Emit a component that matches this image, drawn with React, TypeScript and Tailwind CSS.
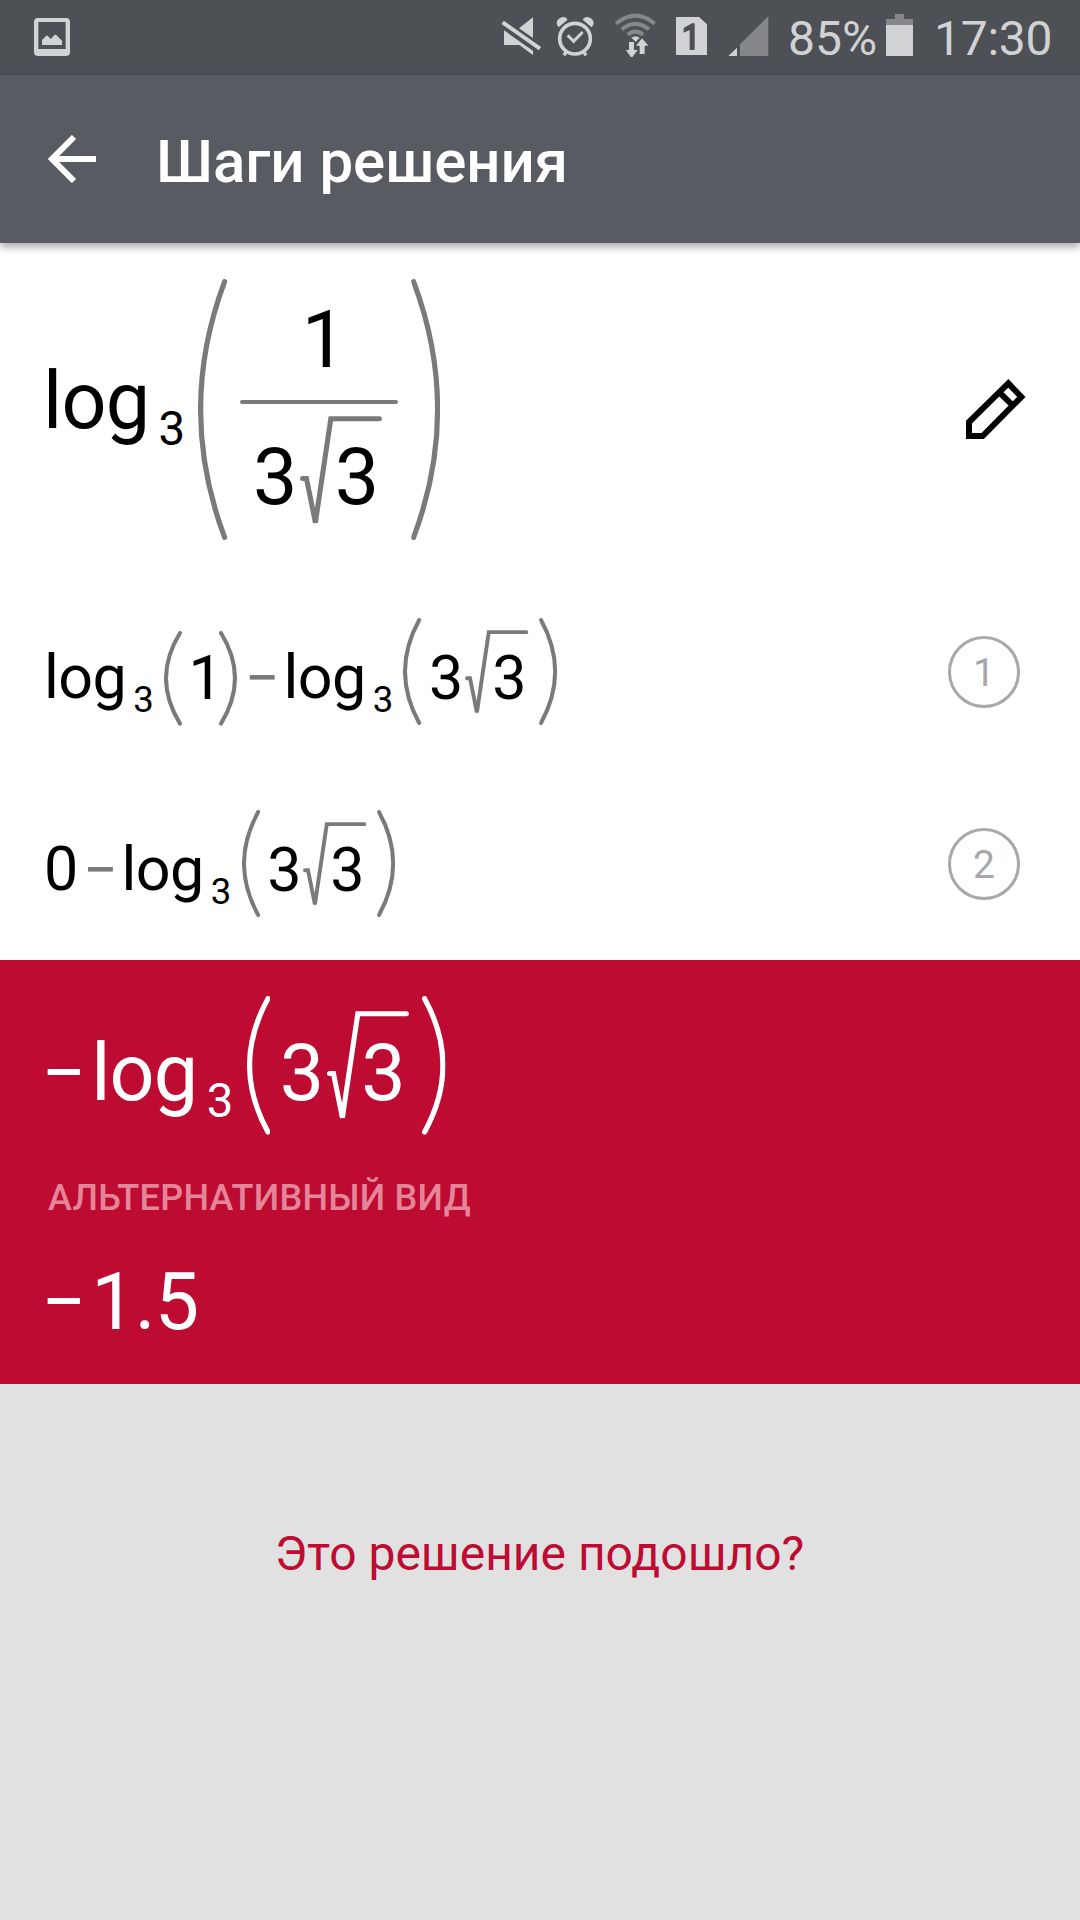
import type { ReactNode } from 'react';

/* ---------- status bar icons ---------- */

function PictureIcon() {
    return (
        <svg className="w-9 h-[38px]" viewBox="0 0 108 114">
            <path
                fillRule="evenodd"
                fill="#d0d2d3"
                d="M12 0h84q12 0 12 12v90q0 12-12 12H12Q0 114 0 102V12Q0 0 12 0zM13 12v81h82V12z"
            />
            <path fill="#d0d2d3" d="M24 81V66l13-13h4l9 10 12-13h4l18 18v13z" />
        </svg>
    );
}

function MuteIcon() {
    return (
        <svg className="w-[42px] h-11" viewBox="60 39 126 132" fill="#d0d2d3">
            <path d="M159 52v62l-42-29zM72 91l62 44 25 17v13l-41-30H72z" />
            <path d="M68 68l111 78" stroke="#4d5054" strokeWidth="22" />
            <path d="M68 67l112 79" stroke="#d0d2d3" strokeWidth="12" />
        </svg>
    );
}

function AlarmIcon() {
    return (
        <svg className="w-10 h-11" viewBox="225 39 120 132" fill="none" stroke="#d0d2d3">
            <circle cx="285" cy="116" r="46" strokeWidth="11" />
            <path d="M263 106l18 18 27-28" strokeWidth="9" />
            <path d="M260 153l-8 13M310 153l8 13" strokeWidth="10" />
            <path
                d="M236 82q-8-10-5-18 6-12 18-13 10-1 14 8zM335 82q8-10 5-18-6-12-18-13-10-1-14 8z"
                fill="#d0d2d3"
                stroke="none"
            />
        </svg>
    );
}

function WifiIcon() {
    return (
        <svg className="w-[43px] h-11" viewBox="402 39 129 132" fill="none">
            <g stroke="#85878a" strokeWidth="12">
                <path d="M408 71q58-48 116 0" />
                <path d="M425 88q41-33 82 0" />
                <path d="M443 104q23-18 47 0" />
            </g>
            <g fill="#d0d2d3">
                <path d="M454 113q13-9 25 0l-12 12z" />
                <path d="M447 126h15v24h11l-18 24-18-24h10z" />
                <path d="M479 162v-25h-11l18-22 19 22h-11v25z" />
            </g>
        </svg>
    );
}

function SimIcon() {
    return (
        <svg className="w-[33px] h-11" viewBox="585 39 99 132">
            <path d="M588 51h69l24 22v92h-93z" fill="#d0d2d3" />
            <path d="M644 70v80h-15V90l-18 8V84l25-14z" fill="#4d5054" />
        </svg>
    );
}

function SignalIcon() {
    return (
        <svg className="w-[41px] h-11" viewBox="744 39 123 132">
            <path d="M865 49v119h-85v-35z" fill="#85878a" />
            <path d="M771 143v25h-26z" fill="#d0d2d3" />
        </svg>
    );
}

function BatteryIcon() {
    return (
        <svg className="w-[27px] h-11" viewBox="348 39 81 132">
            <path d="M375 42h27v15h27v18h-81V57h27z" fill="#85878a" />
            <path d="M348 75h81v93h-81z" fill="#d0d2d3" />
        </svg>
    );
}

/* ---------- math pieces, every size is relative to the formula's font ---------- */

type ParenSize = 'short' | 'tall' | 'fraction';

const parens: Record<ParenSize, { box: string; width: number; height: number }> = {
    short: { box: 'w-[0.295em] h-[1.552em] align-[-0.443em]', width: 29.5, height: 155.2 },
    tall: { box: 'w-[0.298em] h-[1.755em] align-[-0.443em]', width: 29.8, height: 175.5 },
    fraction: { box: 'w-[0.37em] h-[3.304em] align-[-1.422em]', width: 37, height: 330.4 },
};

function Paren({ size, close = false }: { size: ParenSize; close?: boolean }) {
    const { box, width, height } = parens[size];
    const outer = 3.3;
    const end = width - 3.3;
    const control = 2 * outer - end;
    return (
        <svg
            className={`inline-block ${box} ${close ? '-scale-x-100' : ''}`}
            viewBox={`0 0 ${width} ${height}`}
            fill="none"
            stroke="currentColor"
            strokeWidth="6.6"
            strokeLinecap="round"
        >
            <path d={`M${end} 3.3Q${control} ${height / 2} ${end} ${height - 3.3}`} />
        </svg>
    );
}

function Minus() {
    return <span className="-ml-[0.025em] inline-block w-[0.635em]">−</span>;
}

function Log({ base }: { base: string }) {
    return (
        <>
            <span className="tracking-[-0.01em]">log</span>
            <span className="ml-[0.195em] mr-[0.278em] text-[0.6em] leading-none align-[-0.36em]">{base}</span>
        </>
    );
}

function ThreeRootThree({ symbol }: { symbol: string }) {
    return (
        <>
            <span>3</span>
            <svg
                className={`inline-block w-[1.038em] h-[1.383em] ml-[0.032em] align-[-0.265em] ${symbol}`}
                viewBox="0 0 103.8 138.3"
                fill="none"
                stroke="currentColor"
                strokeWidth="6.4"
                strokeLinecap="round"
            >
                <path d="M3.2 79h5L19.5 135 39 3.500h61.500" strokeMiterlimit="2" />
            </svg>
            <span className="-ml-[0.598em]">3</span>
        </>
    );
}

function Group({ size, symbol, children }: { size: ParenSize; symbol: string; children: ReactNode }) {
    return (
        <>
            <span className={symbol}><Paren size={size} /></span>
            {children}
            <span className={symbol}><Paren size={size} close /></span>
        </>
    );
}

function LogOfRoot({ symbol }: { symbol: string }) {
    return (
        <>
            <Log base="3" />
            <Group size="tall" symbol={symbol}>
                <span className="ml-[0.122em] mr-[0.21em]">
                    <ThreeRootThree symbol={symbol} />
                </span>
            </Group>
        </>
    );
}

const gray = 'text-[#7a7a7a]';

function StepNumber({ value }: { value: number }) {
    return (
        <div className="flex size-[72px] items-center justify-center rounded-full border-3 border-[#a7a8aa] pt-0.5 text-[39px] leading-none text-[#a7a8aa]">
            {value}
        </div>
    );
}

export default function App() {
    return (
        <div className="flex h-[1920px] w-[1080px] flex-col overflow-hidden bg-[#e1e1e1] font-[Roboto,sans-serif]">
            <div className="flex h-[75px] shrink-0 items-start bg-[#4d5054] pt-[13px] text-[48px] leading-none text-[#d0d2d3]">
                <div className="ml-[34px] mt-[5px]"><PictureIcon /></div>
                <div className="ml-auto flex">
                    <MuteIcon />
                    <div className="ml-[13px]"><AlarmIcon /></div>
                    <div className="ml-[19px]"><WifiIcon /></div>
                    <div className="ml-[18px]"><SimIcon /></div>
                    <div className="ml-5"><SignalIcon /></div>
                </div>
                <div className="ml-[19px] w-[98px] pt-[2px]">85%</div>
                <BatteryIcon />
                <div className="ml-[21px] w-[146px] pt-[2px] tracking-[-0.005em]">17:30</div>
            </div>

            <header className="z-10 flex h-[168px] shrink-0 items-center bg-[#585b62] pl-12 text-white shadow-[0_4px_8px_rgba(0,0,0,0.35)]">
                <svg className="h-12 w-12" viewBox="0 0 48 48" fill="none" stroke="currentColor" strokeWidth="6">
                    <path d="M26 2L4 24l22 22M4 24h44" />
                </svg>
                <h1 className="ml-[60px] pt-1.5 text-[60px] font-medium leading-none tracking-[-0.001em]">Шаги решения</h1>
            </header>

            <main className="shrink-0 bg-white text-black">
                <div className="flex h-[333px] items-center justify-between pl-[43px] pr-[54px]">
                    <div className="whitespace-nowrap text-[79px] leading-none">
                        <Log base="3" />
                        <Group size="fraction" symbol={gray}>
                            <span className="mx-[0.16em] inline-flex w-[2em] flex-col items-center align-[0.768em]">
                                <span className="ml-[0.12em]">1</span>
                                <span className="mt-[0.247em] h-[0.062em] w-full rounded-full bg-[#7a7a7a]" />
                                <span className="mt-[0.146em] mr-[0.08em] block">
                                    <ThreeRootThree symbol={gray} />
                                </span>
                            </span>
                        </Group>
                    </div>
                    <svg className="mb-0.5 size-[60px]" viewBox="0 0 180 180" fill="none" stroke="black" strokeWidth="18">
                        <path d="M9 171v-42L127 13l39 41L50 171zM100 40l40 39" />
                    </svg>
                </div>

                <div className="flex h-48 items-center justify-between pl-[44px] pr-[60px]">
                    <div className="whitespace-nowrap text-[61px] leading-none">
                        <Log base="3" />
                        <Group size="short" symbol={gray}>
                            <span className="ml-[0.11em] mr-[-0.07em]">1</span>
                        </Group>
                        <span className={`ml-[0.16em] ${gray}`}><Minus /></span>
                        <LogOfRoot symbol={gray} />
                    </div>
                    <StepNumber value={1} />
                </div>

                <div className="flex h-48 items-center justify-between pl-[44px] pr-[60px]">
                    <div className="whitespace-nowrap text-[61px] leading-none">
                        <span>0</span>
                        <span className={`ml-[0.1em] ${gray}`}><Minus /></span>
                        <LogOfRoot symbol={gray} />
                    </div>
                    <StepNumber value={2} />
                </div>
            </main>

            <section className="h-[424px] shrink-0 bg-[#be0b32] pl-[43px] pt-9 text-white">
                <div className="whitespace-nowrap text-[79px] leading-none">
                    <Minus />
                    <LogOfRoot symbol="text-white" />
                </div>
                <div className="ml-[5px] mt-[45px] text-[36px] font-medium leading-none tracking-[0.27px] text-[#e58599]">АЛЬТЕРНАТИВНЫЙ ВИД</div>
                <div className="mt-[47px] text-[79px] leading-none">
                    <Minus />
                    <span className="tracking-[-0.01em]">1.5</span>
                </div>
            </section>

            <p className="mt-[146px] pr-px text-center text-[48px] leading-none text-[#be0b32]">Это решение подошло?</p>
        </div>
    );
}
